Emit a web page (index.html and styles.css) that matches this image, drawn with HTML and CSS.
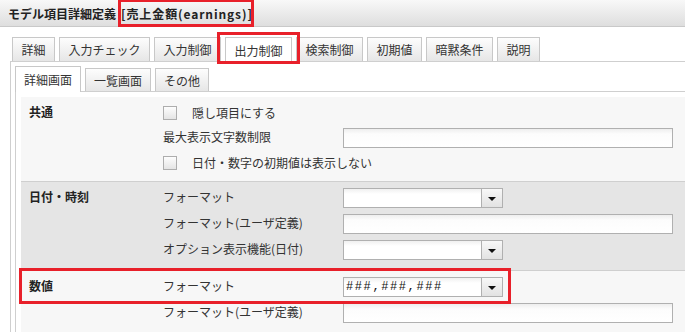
FILE: index.html
```html
<!DOCTYPE html>
<html lang="ja">
<head>
<meta charset="utf-8">
<link rel="stylesheet" href="styles.css">
</head>
<body>
<div class="page">
  <div class="header"><span class="title">モデル項目詳細定義</span><span class="name">[売上金額(earnings)]</span></div>
  <div class="tabs">
    <div class="tab">詳細</div>
    <div class="tab">入力チェック</div>
    <div class="tab">入力制御</div>
    <div class="tab active">出力制御</div>
    <div class="tab">検索制御</div>
    <div class="tab">初期値</div>
    <div class="tab">暗黙条件</div>
    <div class="tab">説明</div>
  </div>
  <div class="panel">
    <div class="subtabs">
      <div class="subtab active">詳細画面</div>
      <div class="subtab">一覧画面</div>
      <div class="subtab">その他</div>
    </div>
    <div class="subpanel">
      <div class="section light common">
        <div class="sec-label">共通</div>
        <div class="rows">
          <div class="row"><span class="cb"></span><span class="cb-label">隠し項目にする</span></div>
          <div class="row"><span class="fl">最大表示文字数制限</span><span class="input"></span></div>
          <div class="row"><span class="cb"></span><span class="cb-label">日付・数字の初期値は表示しない</span></div>
        </div>
      </div>
      <div class="section dark date">
        <div class="sec-label">日付・時刻</div>
        <div class="rows">
          <div class="row"><span class="fl">フォーマット</span><span class="select"><span class="sel-val"></span><span class="sel-btn"></span></span></div>
          <div class="row"><span class="fl">フォーマット(ユーザ定義)</span><span class="input"></span></div>
          <div class="row"><span class="fl">オプション表示機能(日付)</span><span class="select"><span class="sel-val"></span><span class="sel-btn"></span></span></div>
        </div>
      </div>
      <div class="section light num">
        <div class="sec-label">数値</div>
        <div class="rows">
          <div class="row"><span class="fl">フォーマット</span><span class="select"><span class="sel-val mono">###,###,###</span><span class="sel-btn"></span></span></div>
          <div class="row"><span class="fl">フォーマット(ユーザ定義)</span><span class="input"></span></div>
        </div>
      </div>
    </div>
  </div>
  <div class="mark mark-title"></div>
  <div class="mark mark-tab"></div>
  <div class="mark mark-num"></div>
</div>
</body>
</html>
```
FILE: styles.css
```css
html, body {
  margin: 0;
  padding: 0;
  background: #fff;
  overflow: hidden;
}
.page {
  position: relative;
  width: 720px;
  height: 332px;
  font-family: "Noto Sans CJK JP", "Liberation Sans", sans-serif;
  font-size: 12px;
  color: #333;
}
.header {
  height: 26px;
  border-bottom: 1px solid #c9c9c9;
  background: linear-gradient(#f8f8f8, #dedede);
  padding-left: 8px;
  display: flex;
  align-items: center;
  font-weight: bold;
  color: #222;
  white-space: pre;
}
.name {
  margin-left: 5px;
  letter-spacing: 0.9px;
}
.tabs {
  display: flex;
  gap: 4px;
  margin-top: 10px;
  padding-left: 12px;
  height: 24px;
  align-items: flex-end;
}
.tab {
  box-sizing: border-box;
  height: 24px;
  padding: 0 8.5px;
  border: 1px solid #c8c8c8;
  border-bottom: none;
  background: linear-gradient(#fdfdfd, #e6e6e6);
  display: flex;
  align-items: center;
  color: #333;
  white-space: nowrap;
}
.tab.active {
  background: #fff;
  height: 25px;
  margin-bottom: -1px;
  position: relative;
}
.panel {
  margin-left: 10px;
  border-left: 1px solid #cfcfcf;
  border-top: 1px solid #cfcfcf;
  height: 300px;
}
.subtabs {
  display: flex;
  gap: 4px;
  padding-left: 4px;
  padding-top: 4px;
  height: 25px;
  align-items: flex-end;
}
.subtab {
  box-sizing: border-box;
  height: 23px;
  padding: 0 8px;
  border: 1px solid #c8c8c8;
  border-bottom: none;
  background: linear-gradient(#fdfdfd, #e6e6e6);
  display: flex;
  align-items: center;
  white-space: nowrap;
}
.subtab.active {
  height: 26px;
  margin-bottom: -1px;
  background: #fff;
  position: relative;
}
.subpanel {
  margin-left: 4px;
  border-left: 1px solid #cfcfcf;
  border-top: 1px solid #cfcfcf;
  padding: 5px 0 0 5px;
  height: 260px;
}
.section {
  display: flex;
}
.light { background: #f7f7f7; }
.dark { background: #e5e5e5; }
.common { padding: 6px 0 8px; }
.date { padding: 6px 0 10px; border-top: 1px solid #cfcfcf; }
.num { padding: 6px 0 12px; border-top: 1px solid #cfcfcf; }
.sec-label {
  width: 134px;
  padding-left: 8px;
  font-weight: bold;
  color: #222;
  line-height: 18px;
}
.rows {
  display: flex;
  flex-direction: column;
  gap: 6px;
}
.common .rows { gap: 5px; }
.row {
  display: flex;
  align-items: center;
  height: 20px;
}
.fl {
  width: 180px;
  white-space: nowrap;
  line-height: 18px;
  padding-bottom: 2px;
}
.cb {
  box-sizing: border-box;
  width: 14px;
  height: 14px;
  border: 1px solid #adadad;
  background: linear-gradient(#fdfdfd, #e4e4e4);
  margin-right: 15px;
}
.cb-label {
  white-space: nowrap;
  padding-bottom: 2px;
}
.input {
  box-sizing: border-box;
  width: 330px;
  height: 20px;
  border: 1px solid #b0b0b0;
  background: linear-gradient(#eeeeee 0, #fcfcfc 5px, #fff 100%);
}
.select {
  box-sizing: border-box;
  width: 160px;
  height: 20px;
  border: 1px solid #b0b0b0;
  display: flex;
  background: linear-gradient(#f0f0f0 0, #fff 5px);
}
.sel-val {
  flex: 1;
  display: flex;
  align-items: center;
  padding-left: 2px;
}
.mono {
  font-family: "Liberation Mono", monospace;
  font-size: 12px;
  letter-spacing: 1.6px;
  color: #111;
}
.sel-btn {
  width: 20px;
  border-left: 1px solid #b0b0b0;
  background: linear-gradient(#f8f8f8, #e2e2e2);
  display: flex;
  align-items: center;
  justify-content: center;
}
.sel-btn::after {
  content: "";
  width: 0;
  height: 0;
  border-left: 4px solid transparent;
  border-right: 4px solid transparent;
  border-top: 4px solid #111;
  margin-top: 1px;
}
.mark {
  position: absolute;
  box-sizing: border-box;
  border: 3px solid #e8202a;
}
.mark-title { left: 118px; top: -1px; width: 136px; height: 28px; }
.mark-tab { left: 217px; top: 32px; width: 83px; height: 32px; }
.mark-num { left: 19px; top: 268px; width: 492px; height: 36px; }
```
